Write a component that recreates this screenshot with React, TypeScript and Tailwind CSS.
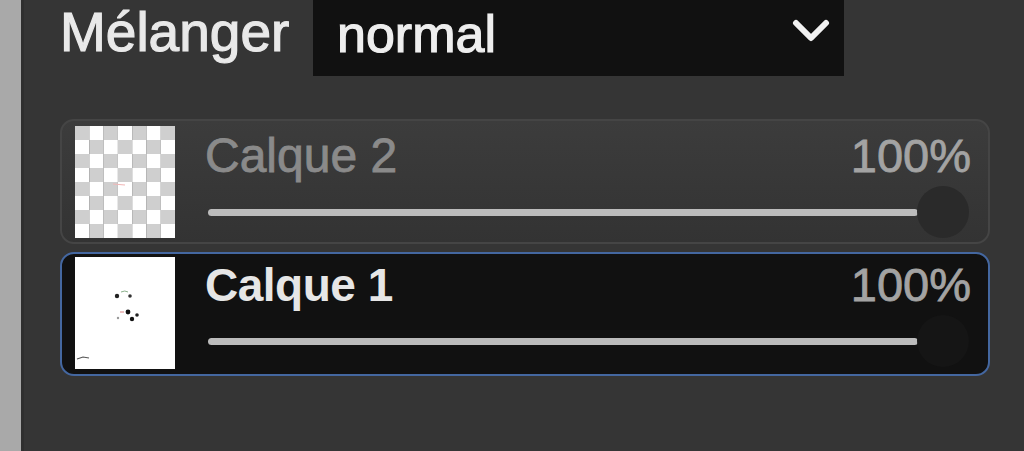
import React from "react";

function Checker() {
  const cells = [];
  for (let r = 0; r < 8; r++) {
    for (let c = 0; c < 7; c++) {
      cells.push(
        <rect key={`${r}-${c}`} x={c * 14.3} y={r * 14} width={14.3} height={14} fill={(r + c) % 2 === 0 ? "#cfcfcf" : "#ffffff"} />
      );
    }
  }
  return (
    <svg width="100" height="112" viewBox="0 0 100 112" className="block shrink-0">
      {cells}
      <line x1="38" y1="58" x2="50" y2="59" stroke="#f2b6b6" strokeWidth="1" />
    </svg>
  );
}

function Drawing() {
  return (
    <svg width="100" height="112" viewBox="0 0 100 112" className="block shrink-0 bg-white">
      <circle cx="42" cy="39" r="2.2" fill="#222" />
      <circle cx="55" cy="39" r="1.8" fill="#333" />
      <path d="M46 35 Q50 33 53 35" stroke="#8bb08b" strokeWidth="1" fill="none" />
      <circle cx="53" cy="55" r="2.4" fill="#111" />
      <circle cx="57" cy="62" r="2.2" fill="#111" />
      <circle cx="62" cy="58" r="1.8" fill="#222" />
      <circle cx="43" cy="61" r="1.2" fill="#999" />
      <line x1="45" y1="55" x2="49" y2="55" stroke="#d98080" strokeWidth="1" />
      <path d="M2 102 L8 100 L14 101" stroke="#555" strokeWidth="1.2" fill="none" />
    </svg>
  );
}

function Layer({
  name,
  selected,
}: {
  name: string;
  selected?: boolean;
}) {
  return (
    <div
      className={
        selected
          ? "flex items-start h-[124px] rounded-[14px] border-[2px] border-[#4467a0] bg-[#111111] pl-[13px] pt-[3px]"
          : "flex items-start h-[125px] rounded-[14px] border-[2px] border-[#454545] bg-gradient-to-b from-[#3c3c3c] to-[#333333] pl-[13px] pt-[5px]"
      }
    >
      {selected ? <Drawing /> : <Checker />}
      <div className={selected ? "flex-1 ml-[30px] mr-[17px] pt-[4px] flex flex-col" : "flex-1 ml-[30px] mr-[17px] pt-[6px] flex flex-col"}>
        <div className="flex justify-between items-start h-[48px] leading-[48px]">
          <span
            className={
              selected
                ? "text-[46px] font-bold text-[#e6e6e6] tracking-[-0.5px]"
                : "text-[48px] text-[#8a8a8a] [-webkit-text-stroke:0.8px_#8a8a8a]"
            }
          >
            {name}
          </span>
          <span className="text-[47px] text-[#a3a3a3] [-webkit-text-stroke:0.8px_#a3a3a3]">100%</span>
        </div>
        <div className="flex items-center mt-[6px] h-[52px]">
          <div className="flex-1 ml-[3px] h-[7px] rounded-full bg-[#bcbcbc]" />
          <div
            className={
              selected
                ? "w-[52px] h-[52px] rounded-full bg-[#151515] -ml-[1px] mr-[2px]"
                : "w-[52px] h-[52px] rounded-full bg-[#2a2a2a] -ml-[1px] mr-[2px]"
            }
          />
        </div>
      </div>
    </div>
  );
}

export default function App() {
  return (
    <div
      className="w-[1024px] h-[451px] flex overflow-hidden"
      style={{ fontFamily: '"Liberation Sans", Arial, sans-serif' }}
    >
      <div className="w-[21px] h-full bg-[#a9a9a9] shrink-0" />
      <div className="w-[3px] h-full bg-[#2f2f2f] shrink-0" />
      <div className="flex-1 h-full bg-[#353535] pl-[36px] pr-[34px] flex flex-col">
        <div className="flex items-start h-[77px]">
          <span className="mt-[5px] text-[55px] leading-[55px] text-[#e9e9e9] [-webkit-text-stroke:1.2px_#e9e9e9] w-[253px] shrink-0">
            Mélanger
          </span>
          <div className="w-[531px] h-[76px] bg-[#111111] flex items-start justify-between pl-[24px] pr-[12px] pt-[8px]">
            <span className="text-[52px] leading-[52px] text-[#eeeeee] [-webkit-text-stroke:1.2px_#eeeeee]">normal</span>
            <svg width="40" height="30" viewBox="0 0 40 30" className="mt-[8px]">
              <polyline points="4,7 19,22 34,7" fill="none" stroke="#f2f2f2" strokeWidth="6" strokeLinecap="round" strokeLinejoin="round" />
            </svg>
          </div>
        </div>
        <div className="mt-[42px] flex flex-col gap-[8px]">
          <Layer name="Calque 2" />
          <Layer name="Calque 1" selected />
        </div>
      </div>
    </div>
  );
}
